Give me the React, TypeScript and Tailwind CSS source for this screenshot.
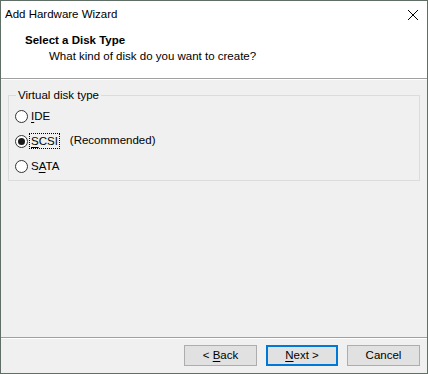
import { useState } from 'react';

const options = [
  { id: 'ide', pre: '', key: 'I', post: 'DE', note: '' },
  { id: 'scsi', pre: '', key: 'S', post: 'CSI', note: '(Recommended)' },
  { id: 'sata', pre: 'S', key: 'A', post: 'TA', note: '' },
];

function Radio({ checked }: { checked: boolean }) {
  return (
    <span className="w-[13px] h-[13px] rounded-full border border-[#333] bg-white flex items-center justify-center shrink-0">
      {checked && <span className="w-[7px] h-[7px] rounded-full bg-[#1a1a1a]" />}
    </span>
  );
}

export default function App() {
  const [selected, setSelected] = useState('scsi');

  return (
    <div
      className="w-[428px] h-[374px] border border-[#5f6f65] bg-[#f0f0f0] flex flex-col text-[11.5px] text-black overflow-hidden"
      style={{ fontFamily: '"Liberation Sans", "Segoe UI", sans-serif' }}
    >
      {/* Title bar + header */}
      <div className="bg-white h-[77px] flex flex-col shrink-0">
        <div className="h-[27px] flex items-center justify-between pl-[4px] pr-[7px]">
          <span className="text-[11.5px] leading-none">Add Hardware Wizard</span>
          <svg width="12" height="12" viewBox="0 0 12 12" className="mr-[1px]">
            <path d="M1 1L11 11M11 1L1 11" stroke="#000" strokeWidth="1" />
          </svg>
        </div>
        <div className="pl-[24px] pt-[4px] font-bold leading-[16px]">Select a Disk Type</div>
        <div className="pl-[48px] leading-[16px]">What kind of disk do you want to create?</div>
      </div>
      <div className="h-px bg-[#a0a0a0]" />
      <div className="h-px bg-white" />

      {/* Body */}
      <div className="flex-1 px-[7px] pt-[8px]">
        <fieldset className="border border-[#dcdcdc] h-[93px] px-[6px] pb-0 m-0 min-w-0">
          <legend className="px-[2px] ml-[1px] leading-[14px]">Virtual disk type</legend>
          <div className="flex flex-col gap-[9px] pt-[6px]">
            {options.map(o => (
              <label
                key={o.id}
                className="flex items-center gap-[2px] h-[16px] cursor-default"
                onClick={() => setSelected(o.id)}
              >
                <Radio checked={selected === o.id} />
                <span
                  className={`px-[1px] leading-[14px] ${
                    selected === o.id ? 'outline outline-1 outline-dotted outline-black' : ''
                  }`}
                >
                  {o.pre}
                  <span className="underline underline-offset-2">{o.key}</span>
                  {o.post}
                </span>
                {o.note && <span className="ml-[9px]">{o.note}</span>}
              </label>
            ))}
          </div>
        </fieldset>
      </div>

      {/* Footer */}
      <div className="h-px bg-[#a0a0a0]" />
      <div className="h-px bg-white" />
      <div className="h-[34px] flex items-start justify-end gap-[9px] pr-[7px] pt-[6px]">
        <button className="w-[73px] h-[21px] border border-[#adadad] bg-[#e1e1e1] leading-none">
          &lt; <span className="underline underline-offset-2">B</span>ack
        </button>
        <button className="w-[72px] h-[21px] border-2 border-[#0078d7] bg-[#e1e1e1] leading-none">
          <span className="underline underline-offset-2">N</span>ext &gt;
        </button>
        <button className="w-[73px] h-[21px] border border-[#adadad] bg-[#e1e1e1] leading-none">
          Cancel
        </button>
      </div>
    </div>
  );
}
